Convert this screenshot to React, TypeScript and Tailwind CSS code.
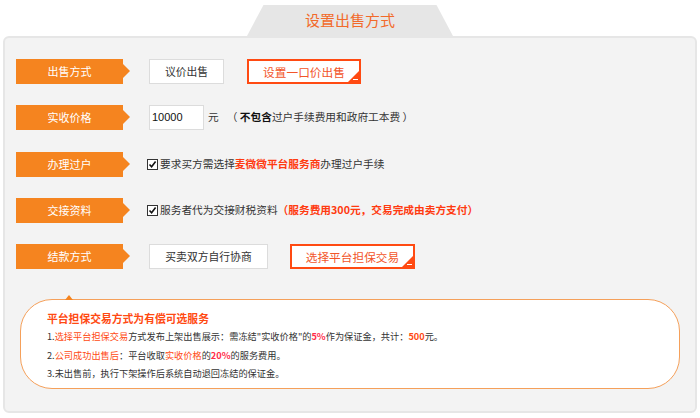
import React from "react";

const font = { fontFamily: '"Noto Sans CJK SC", "Liberation Sans", sans-serif' };

function Label({ text }: { text: string }) {
  return (
    <div className="relative h-[25px] w-[107px] shrink-0 bg-[#f5841f] text-white text-[11px] flex items-center justify-center">
      {text}
      <div className="absolute right-[-7px] top-[5px] w-0 h-0 border-y-[7px] border-y-transparent border-l-[7px] border-l-[#f5841f]" />
    </div>
  );
}

function Btn({ text, w }: { text: string; w: string }) {
  return (
    <div className={`h-[25px] ${w} bg-white border border-[#dcdcdc] text-[#333] text-[10.8px] flex items-center justify-center`}>
      {text}
    </div>
  );
}

function SelBtn({ text, w }: { text: string; w: string }) {
  return (
    <div className={`relative h-[25px] ${w} bg-white border-2 border-[#ff4a12] text-[#f2552a] text-[11.7px] flex items-center justify-center`}>
      {text}
      <div className="absolute right-0 bottom-0 w-0 h-0 border-l-[11px] border-l-transparent border-b-[11px] border-b-[#ff4a12]" />
      <div className="absolute right-[1px] bottom-[2px] w-[5px] h-[1px] bg-white" />
    </div>
  );
}

function Check() {
  return (
    <div className="w-[11px] h-[11px] border border-[#333] bg-white flex items-center justify-center mr-[2px]">
      <svg width="9" height="9" viewBox="0 0 9 9">
        <path d="M1.5 4.5 L3.6 6.8 L7.6 1.6" fill="none" stroke="#111" strokeWidth="1.6" />
      </svg>
    </div>
  );
}

export default function App() {
  return (
    <div className="w-[700px] h-[418px] bg-white relative" style={font}>
      <div className="h-[36px] flex justify-center items-end">
        <div className="w-[206px] h-[31px] bg-[#e6e6e6] [clip-path:polygon(8%_0,92%_0,100%_100%,0_100%)] flex items-center justify-center text-[#f26a2a] text-[15px]">
          设置出售方式
        </div>
      </div>
      <div className="mx-[3px] h-[377px] border-2 border-[#e6e6e6] rounded-[6px] bg-[#f3f3f3] pt-[21px] pl-[11px]">
        <div className="flex flex-col gap-[21px]">
          <div className="flex items-center">
            <Label text="出售方式" />
            <div className="ml-[26px]"><Btn text="议价出售" w="w-[75px]" /></div>
            <div className="ml-[23px]"><SelBtn text="设置一口价出售" w="w-[114px]" /></div>
          </div>
          <div className="flex items-center text-[10.7px] text-[#333]">
            <Label text="实收价格" />
            <div className="ml-[26px] h-[25px] w-[55px] bg-white border border-[#dcdcdc] flex items-center pl-[2px] text-[11px] text-[#111]" style={{ fontFamily: '"Liberation Sans", sans-serif' }}>10000</div>
            <span className="ml-[4px]">元</span>
            <span className="ml-[8px]">（ <b className="text-[#111]">不包含</b>过户手续费用和政府工本费 ）</span>
          </div>
          <div className="flex items-center text-[10.7px] text-[#333] mt-[1px]">
            <Label text="办理过户" />
            <div className="ml-[24px] flex items-center">
              <Check />
              <span>要求买方需选择<b className="text-[#ff3a10]">麦微微平台服务商</b>办理过户手续</span>
            </div>
          </div>
          <div className="flex items-center text-[10.7px] text-[#333]">
            <Label text="交接资料" />
            <div className="ml-[24px] flex items-center">
              <Check />
              <span>服务者代为交接财税资料<b className="text-[#ff3a10]">（服务费用300元，交易完成由卖方支付）</b></span>
            </div>
          </div>
          <div className="flex items-center">
            <Label text="结款方式" />
            <div className="ml-[26px]"><Btn text="买卖双方自行协商" w="w-[119px]" /></div>
            <div className="ml-[22px]"><SelBtn text="选择平台担保交易" w="w-[125px]" /></div>
          </div>
        </div>
        <div className="relative mt-[30px] ml-[4px] w-[660px] h-[90px] bg-white border border-[#f5a05a] rounded-[32px] pl-[26px] pt-[9px] text-[#333]">
          <div className="absolute left-[44px] top-[-5px] w-0 h-0 border-x-[4px] border-x-transparent border-b-[5px] border-b-[#f5841f]" />
          <div className="text-[10.8px] font-bold text-[#ff4a12] leading-[18px]">平台担保交易方式为有偿可选服务</div>
          <div className="text-[9.2px] leading-[18.5px]">
            1.<span className="text-[#ff4a12]">选择平台担保交易</span>方式发布上架出售展示：需冻结"实收价格"的<b className="text-[#ff2d4a]">5%</b>作为保证金，共计：<b className="text-[#ff4a12]">500</b>元。
          </div>
          <div className="text-[9.2px] leading-[18.5px]">
            2.<span className="text-[#ff4a12]">公司成功出售后</span>：平台收取<span className="text-[#ff4a12]">实收价格</span>的<b className="text-[#ff2d4a]">20%</b>的服务费用。
          </div>
          <div className="text-[9.2px] leading-[18.5px]">3.未出售前，执行下架操作后系统自动退回冻结的保证金。</div>
        </div>
      </div>
    </div>
  );
}
